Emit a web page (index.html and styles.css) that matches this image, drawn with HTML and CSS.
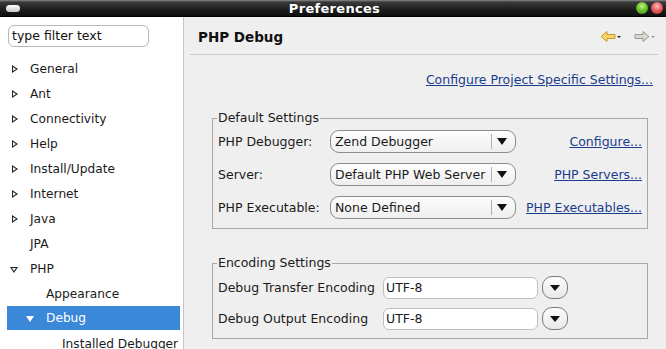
FILE: index.html
```html
<!DOCTYPE html>
<html>
<head>
<meta charset="utf-8">
<link rel="stylesheet" href="styles.css">
</head>
<body>
<div class="window">
  <div class="titlebar">
    <span class="tb-side"><span class="tb-left"></span></span>
    <span class="tb-title">Preferences</span>
    <span class="tb-side tb-right"><span class="dot green"></span><span class="dot red"></span></span>
  </div>
  <div class="main">
    <div class="side">
      <div class="filter">type filter text</div>
      <ul class="tree">
        <li class="item"><span class="tw closed"></span>General</li>
        <li class="item"><span class="tw closed"></span>Ant</li>
        <li class="item"><span class="tw closed"></span>Connectivity</li>
        <li class="item"><span class="tw closed"></span>Help</li>
        <li class="item"><span class="tw closed"></span>Install/Update</li>
        <li class="item"><span class="tw closed"></span>Internet</li>
        <li class="item"><span class="tw closed"></span>Java</li>
        <li class="item"><span class="tw"></span>JPA</li>
        <li class="item"><span class="tw open"></span>PHP</li>
        <li class="item l1"><span class="tw"></span>Appearance</li>
        <li class="item l1 sel"><span class="tw open white"></span>Debug</li>
        <li class="item l2"><span class="tw"></span>Installed Debugger</li>
      </ul>
    </div>
    <div class="content">
      <div class="header">
        <span class="htitle">PHP Debug</span>
        <span class="nav">
          <svg width="22" height="14" viewBox="0 0 22 14">
            <path d="M1 6.5 L7 1.5 L7 4.5 L15 4.5 L15 8.5 L7 8.5 L7 11.5 Z" fill="#f7d36b" stroke="#c99a1e" stroke-width="1"/>
            <path d="M17 6 L21 6 L19 8 Z" fill="#222"/>
          </svg>
          <svg width="22" height="14" viewBox="0 0 22 14">
            <path d="M15 6.5 L9 1.5 L9 4.5 L1 4.5 L1 8.5 L9 8.5 L9 11.5 Z" fill="#d8d8d0" stroke="#9a9a92" stroke-width="1"/>
            <path d="M17 6 L21 6 L19 8 Z" fill="#999"/>
          </svg>
        </span>
      </div>
      <div class="linkrow"><a class="link">Configure Project Specific Settings...</a></div>
      <fieldset class="group g1">
        <legend>Default Settings</legend>
        <div class="row">
          <span class="lbl">PHP Debugger:</span>
          <span class="combo"><span class="cv">Zend Debugger</span><span class="ca"></span></span>
          <a class="link rl">Configure...</a>
        </div>
        <div class="row">
          <span class="lbl">Server:</span>
          <span class="combo"><span class="cv">Default PHP Web Server</span><span class="ca"></span></span>
          <a class="link rl">PHP Servers...</a>
        </div>
        <div class="row">
          <span class="lbl">PHP Executable:</span>
          <span class="combo"><span class="cv">None Defined</span><span class="ca"></span></span>
          <a class="link rl">PHP Executables...</a>
        </div>
      </fieldset>
      <fieldset class="group g2">
        <legend>Encoding Settings</legend>
        <div class="row">
          <span class="lbl2">Debug Transfer Encoding</span>
          <span class="entry">UTF-8</span>
          <span class="rbtn"></span>
        </div>
        <div class="row">
          <span class="lbl2">Debug Output Encoding</span>
          <span class="entry">UTF-8</span>
          <span class="rbtn"></span>
        </div>
      </fieldset>
    </div>
  </div>
</div>
</body>
</html>
```

FILE: styles.css
```css
* { box-sizing: border-box; }
html, body { margin: 0; padding: 0; }
body {
  width: 666px; height: 349px; overflow: hidden;
  font-family: "DejaVu Sans", sans-serif; font-size: 12.5px; color: #1a1a1a;
  background: #efefef;
}
.window { width: 666px; height: 349px; display: flex; flex-direction: column; }
.titlebar {
  height: 17px; flex: none;
  background: linear-gradient(#8a8a8a 0, #3a3a3a 2px, #1c1c1c 10px, #0c0c0c 17px);
  display: flex; align-items: center; justify-content: space-between;
  padding: 0 3px 0 6px;
  border-bottom: 1px solid #000;
}
.tb-side { width: 40px; display: flex; }
.tb-left {
  width: 14px; height: 7px; border-radius: 4px;
  background: linear-gradient(#ffffff, #c8c8c8);
}
.tb-title { color: #fff; font-weight: bold; font-size: 13px; letter-spacing: 0.3px; }
.tb-right { justify-content: flex-end; gap: 3px; }
.dot { width: 12px; height: 12px; border-radius: 50%; }
.green { background: radial-gradient(circle at 50% 35%, #c8f08a 0, #6ac22e 45%, #3d8a14 100%); }
.red { background: radial-gradient(circle at 50% 35%, #ffc0c0 0, #e86060 45%, #b02828 100%); }
.main { flex: 1; display: flex; min-height: 0; }
.side {
  width: 184px; flex: none; background: #fff;
  border-right: 1px solid #c6c6c6;
  padding: 8px 0 0 7px; overflow: hidden;
}
.filter {
  width: 141px; height: 22px; border: 1px solid #b8b8b8; border-radius: 6px;
  padding: 2px 3px; line-height: 16px; color: #111; background: #fff;
  margin-left: 1px;
}
.tree { list-style: none; margin: 9px 0 0 0; padding: 0; font-size: 12.2px; }
.item { height: 25px; display: flex; align-items: center; padding-left: 2px; white-space: nowrap; }
.tw { width: 21px; flex: none; height: 12px; position: relative; }
.tw.closed::before {
  content: ""; position: absolute; left: 3px; top: 2px;
  border-left: 6px solid #222; border-top: 4px solid transparent; border-bottom: 4px solid transparent;
}
.tw.closed::after {
  content: ""; position: absolute; left: 4px; top: 4px;
  border-left: 3px solid #fff; border-top: 2px solid transparent; border-bottom: 2px solid transparent;
}
.tw.open::before {
  content: ""; position: absolute; left: 1px; top: 4px;
  border-top: 6px solid #222; border-left: 4px solid transparent; border-right: 4px solid transparent;
}
.tw.open::after {
  content: ""; position: absolute; left: 3px; top: 5px;
  border-top: 3px solid #fff; border-left: 2px solid transparent; border-right: 2px solid transparent;
}
.tw.open.white::before { border-top-color: #fff; }
.tw.open.white::after { border-top-color: #fff; }
.l1 { padding-left: 18px; }
.l2 { padding-left: 34px; }
.sel { background: #3b88d8; color: #fff; width: 173px; height: 24px; margin-bottom: 1px; }
.content { flex: 1; padding: 0 8px 0 6px; display: flex; flex-direction: column; }
.header {
  height: 38px; flex: none; display: flex; align-items: center; justify-content: space-between;
  border-bottom: 1px solid #c8c8c8; padding: 2px 0 0 8px;
}
.htitle { font-weight: bold; font-size: 13.5px; color: #111; }
.nav { display: flex; gap: 12px; margin-right: 2px; }
.linkrow { display: flex; justify-content: flex-end; padding: 17px 5px 0 0; height: 40px; flex: none; }
.link { color: #1a3c8c; text-decoration: underline; white-space: nowrap; }
.group {
  margin: 16px 10px 0 22px; padding: 0 5px 6px 5px;
  border: 1px solid #a8a8a8; border-radius: 0; flex: none;
}
.group legend { padding: 0 1px; margin-left: -1px; line-height: 14px; }
.g1 { height: 118px; }
.g2 { margin-top: 27px; height: 83px; padding-top: 2px; }
.row { display: flex; align-items: center; height: 33px; white-space: nowrap; }
.g2 .row { height: 31px; }
.lbl { width: 112px; flex: none; }
.combo {
  width: 186px; height: 23px; flex: none; display: flex; align-items: center;
  border: 1px solid #8c8c8c; border-radius: 9px; background: linear-gradient(#fdfdfd, #efefef);
  padding-left: 4px;
}
.cv { flex: 1; }
.ca {
  width: 22px; height: 15px; border-left: 1px solid #b0b0b0; position: relative; margin-right: 2px;
}
.ca::after {
  content: ""; position: absolute; left: 5px; top: 4px;
  border-top: 7px solid #111; border-left: 5px solid transparent; border-right: 5px solid transparent;
}
.rl { margin-left: auto; }
.lbl2 { width: 165px; flex: none; }
.entry {
  width: 155px; height: 22px; flex: none; border: 1px solid #c0c0c0; border-radius: 6px;
  background: #fff; padding: 2px 2px; line-height: 16px;
}
.rbtn {
  width: 26px; height: 23px; margin-left: 4px; border: 1px solid #7a7a7a; border-radius: 10px;
  background: linear-gradient(#fdfdfd, #e8e8e8); position: relative;
}
.rbtn::after {
  content: ""; position: absolute; left: 7px; top: 8px;
  border-top: 6px solid #111; border-left: 5px solid transparent; border-right: 5px solid transparent;
}
```
